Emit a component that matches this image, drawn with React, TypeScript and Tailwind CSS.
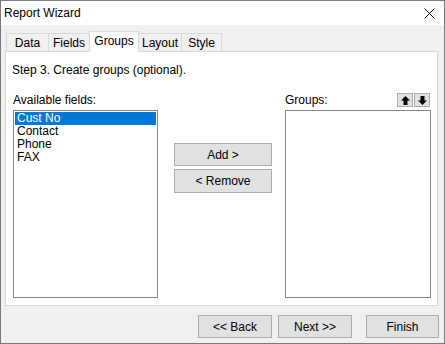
import React from "react";

function Btn({ w, h = 23, children, cls = "" }: { w: number; h?: number; children: React.ReactNode; cls?: string }) {
  return (
    <div
      className={`flex items-center justify-center bg-[#e1e1e1] border border-[#adadad] leading-[14px] ${cls}`}
      style={{ width: w, height: h }}
    >
      {children}
    </div>
  );
}

function Arrow({ down = false }: { down?: boolean }) {
  return (
    <div className="w-[16px] h-[14px] bg-[#e1e1e1] border border-[#adadad] flex items-center justify-center">
      <svg width="11" height="11" viewBox="0 0 11 11" style={down ? { transform: "rotate(180deg)" } : undefined}>
        <path d="M5.5 1 L10 5.5 L7.5 5.5 L7.5 10 L3.5 10 L3.5 5.5 L1 5.5 Z" fill="#000" />
      </svg>
    </div>
  );
}

export default function App() {
  return (
    <div className="w-[445px] h-[344px] flex flex-col border border-[#7a7a7a] bg-[#f0f0f0] font-['Liberation_Sans',Arial,sans-serif] text-[12px] text-black overflow-hidden">
      {/* title bar */}
      <div className="h-[24px] shrink-0 bg-white flex items-center justify-between pl-[3px] pr-[9px]">
        <span className="leading-[14px]">Report Wizard</span>
        <svg width="11" height="11" viewBox="0 0 11 11">
          <path d="M0.5 0.5L10.5 10.5M10.5 0.5L0.5 10.5" stroke="#111" strokeWidth="1" />
        </svg>
      </div>

      {/* tabs + panel */}
      <div className="pl-[4px] pt-[6px] flex flex-col">
        <div className="h-[20px] flex items-end pl-[1px]">
          <div className="w-[42px] h-[18px] border-l border-t border-[#d9d9d9] flex justify-center pt-[2px] leading-[14px]">Data</div>
          <div className="w-[41px] h-[18px] border-l border-t border-[#d9d9d9] flex justify-center pt-[2px] leading-[14px]">Fields</div>
          <div className="relative z-10 w-[50px] h-[21px] -mb-px border-l border-t border-r border-[#d9d9d9] bg-white flex justify-center pt-[2px] leading-[14px]">Groups</div>
          <div className="w-[43px] h-[18px] border-t border-r border-[#d9d9d9] flex justify-center pt-[2px] leading-[14px]">Layout</div>
          <div className="w-[40px] h-[18px] border-t border-r border-[#d9d9d9] flex justify-center pt-[2px] leading-[14px]">Style</div>
        </div>
        <div className="w-[433px] h-[255px] border border-[#d9d9d9] bg-white pl-[6px] pt-[11px] flex flex-col">
          <div className="leading-[14px]">Step 3. Create groups (optional).</div>
          <div className="mt-[16px] flex">
            <div className="ml-[1px] w-[145px] flex flex-col">
              <div className="h-[14px] leading-[14px]">Available fields:</div>
              <div className="mt-[3px] h-[188px] border border-[#828790] p-px bg-white">
                <div className="leading-[13px] pl-[2px] bg-[#0078d7] text-white">Cust No</div>
                <div className="leading-[13px] pl-[2px]">Contact</div>
                <div className="leading-[13px] pl-[2px]">Phone</div>
                <div className="leading-[13px] pl-[2px]">FAX</div>
              </div>
            </div>
            <div className="ml-[16px] w-[98px] pt-[50px] flex flex-col gap-[3px]">
              <Btn w={98}>Add &gt;</Btn>
              <Btn w={98} h={24}>&lt; Remove</Btn>
            </div>
            <div className="ml-[13px] w-[146px] flex flex-col">
              <div className="h-[14px] flex justify-between items-start pr-[1px]">
                <span className="leading-[14px]">Groups:</span>
                <div className="flex gap-px">
                  <Arrow />
                  <Arrow down />
                </div>
              </div>
              <div className="mt-[3px] h-[188px] border border-[#828790] bg-white" />
            </div>
          </div>
        </div>
      </div>

      {/* bottom buttons */}
      <div className="pt-[9px] flex justify-end pr-[5px]">
        <Btn w={74}>&lt;&lt; Back</Btn>
        <Btn w={74} cls="ml-[6px]">Next &gt;&gt;</Btn>
        <Btn w={73} cls="ml-[14px]">Finish</Btn>
      </div>
    </div>
  );
}
